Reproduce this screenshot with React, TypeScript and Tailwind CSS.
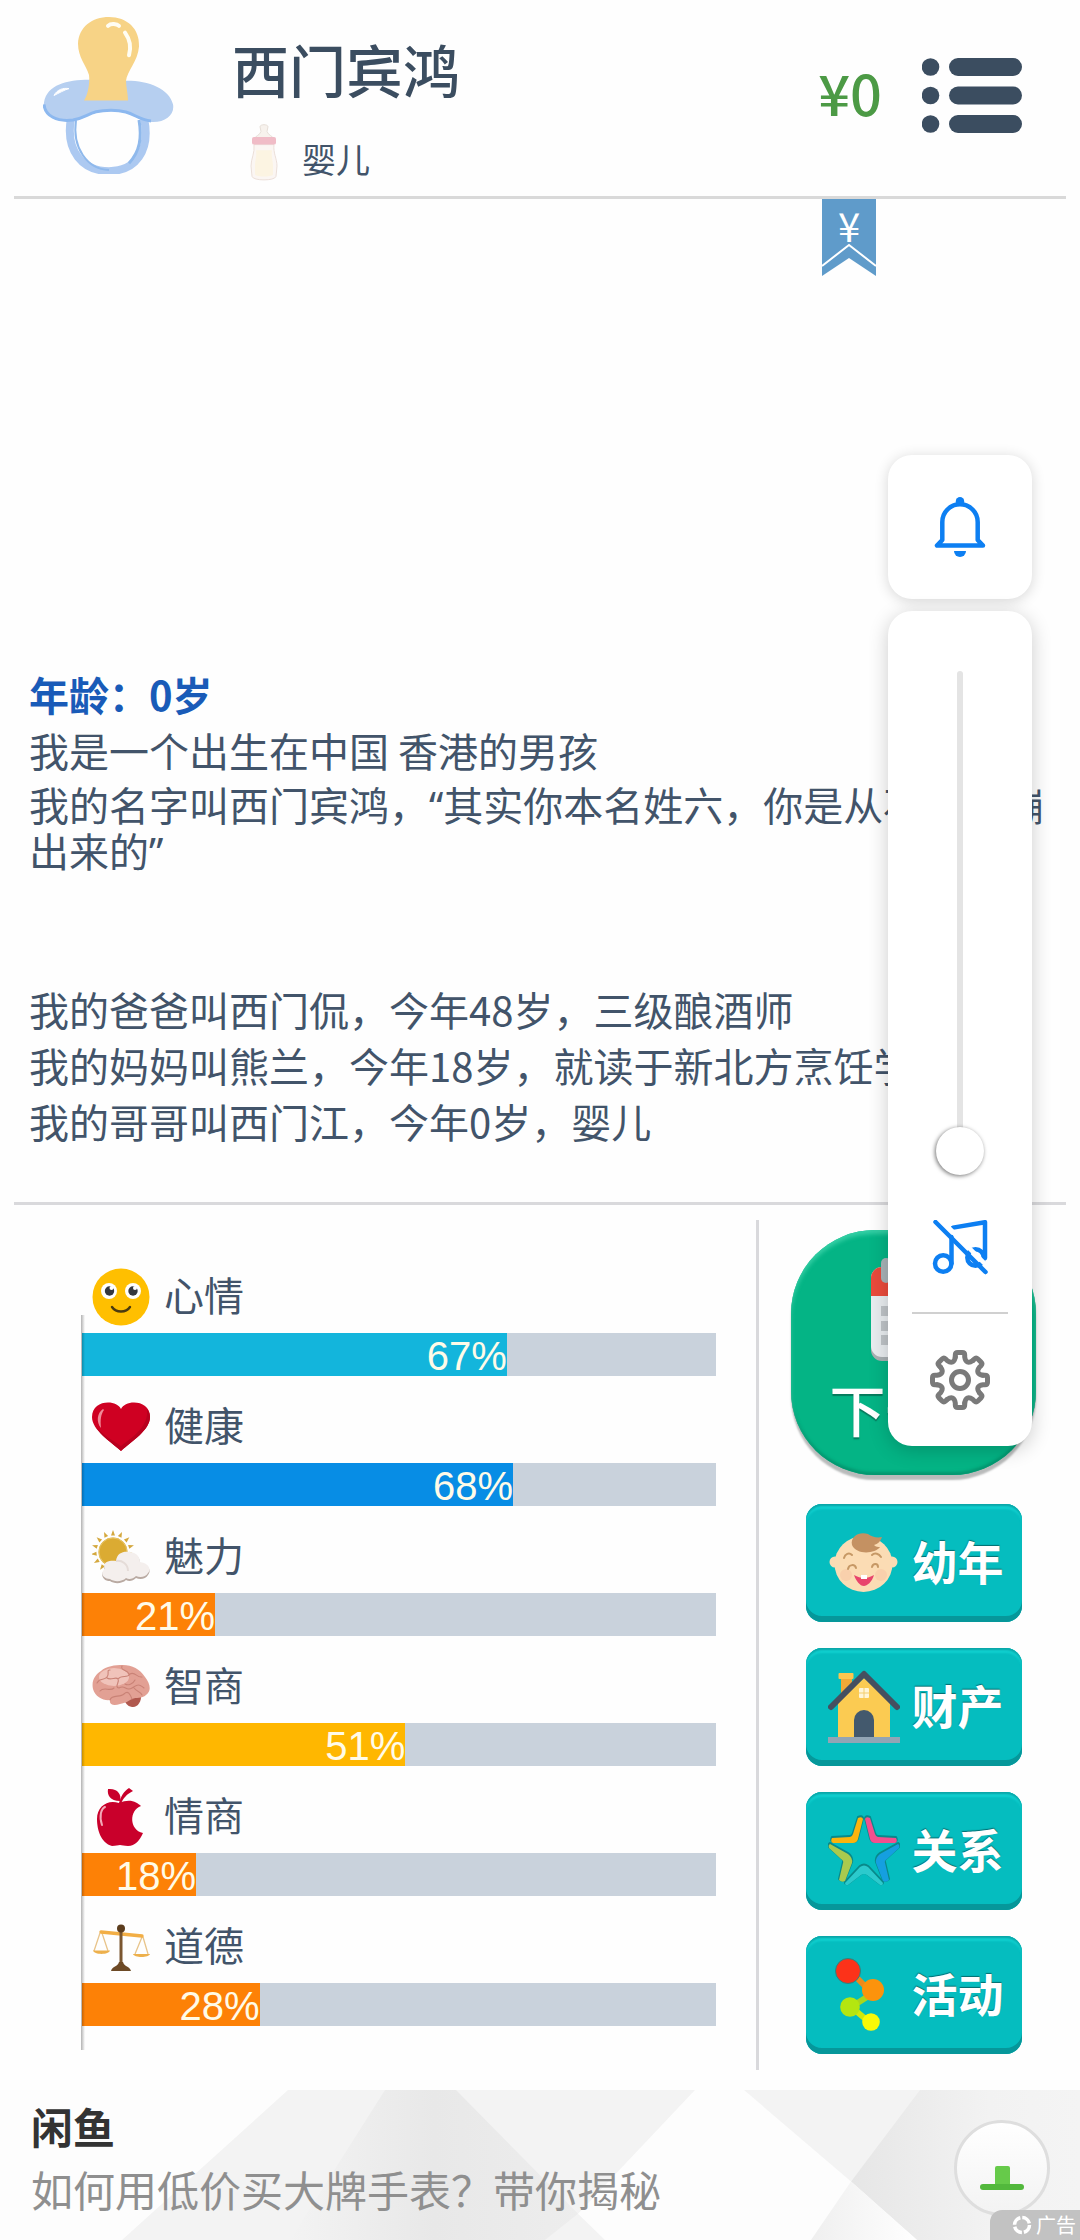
import { useState, ReactNode } from "react";

interface Stat {
  label: string;
  value: number;
  color: string;
  icon: ReactNode;
}

interface MenuItem {
  label: string;
  icon: ReactNode;
}

function PacifierIcon() {
  return (
    <svg viewBox="0 0 131 161" preserveAspectRatio="none" className="h-[158px] w-[131px]" aria-hidden="true">
      <path
        d="M28 104C22 138 40 158 66 158C92 158 108 138 101 104"
        fill="none"
        stroke="#acc9f1"
        strokeWidth="8"
      />
      <path
        d="M33 106C29 134 44 156 66 157"
        fill="none"
        stroke="#8fb9ec"
        strokeWidth="2"
      />
      <path
        d="M96 106C99 124 97 138 86 150"
        fill="none"
        stroke="#8fb9ec"
        strokeWidth="3"
      />
      <path
        d="M46 65C24 65 4 70 1 88C-1 102 14 109 30 107C46 104 46 97 68 97C90 97 92 106 108 108C122 109 132 101 130 90C126 74 106 66 84 66Z"
        fill="#b6cff0"
      />
      <path
        d="M1 90C2 102 14 108 30 106C46 103 46 96 68 96C90 96 92 105 108 107"
        fill="none"
        stroke="#8cb8ef"
        strokeWidth="3"
      />
      <path
        d="M66 1C84 1 97 13 96 31C95 46 84 56 83 66C83 72 85 80 85 86H41C45 80 47 68 46 60C43 50 35 42 35 28C36 11 49 1 66 1Z"
        fill="#f7d386"
      />
      <path
        d="M65 10C68 7 74 8 76 10M82 17C87 24 88 33 86 40"
        fill="none"
        stroke="#fffdf3"
        strokeWidth="4"
        strokeLinecap="round"
      />
      <path d="M11 81C14 75 20 73 26 74C22 75 15 79 11 81Z" fill="#fff" stroke="#fff" />
    </svg>
  );
}

function BottleIcon() {
  return (
    <svg viewBox="0 0 28 62" preserveAspectRatio="none" className="h-[58px] w-7" aria-hidden="true">
      <path
        d="M10 3C10 0 18 0 18 3L17 8C18 12 23 13 24 16H4C5 13 10 12 11 8Z"
        fill="#f7f2ed"
        stroke="#e5ddd6"
      />
      <path
        d="M4 22H24C23 31 27 37 27 45L26 56C25 61 3 61 2 56L1 45C1 37 5 31 4 22Z"
        fill="#fbf6f3"
        stroke="#eaded8"
      />
      <path
        d="M6 28H22C21 34 23 39 23 45V54C21 57 7 57 5 54V45C5 39 7 34 6 28Z"
        fill="#fcf4e2"
      />
      <rect x="2" y="14" width="24" height="8" rx="2" fill="#f0bcc7" />
    </svg>
  );
}

function ListIcon() {
  return (
    <svg viewBox="0 0 100 75" className="h-[75px] w-[100px]" fill="#3b4d60" aria-hidden="true">
      {[0, 28.5, 57].map((y) => (
        <g key={y}>
          <circle cx="8.5" cy={y + 9} r="8.8" />
          <rect x="27" y={y} width="73" height="18" rx="9" />
        </g>
      ))}
    </svg>
  );
}

function BellIcon() {
  return (
    <svg viewBox="0 0 60 60" className="h-[60px] w-[60px]" aria-hidden="true">
      <path
        d="M7 48.6H53L47.7 43V25A17.7 17.7 0 0 0 12.3 25V43Z"
        fill="none"
        stroke="#0d7ff2"
        strokeWidth="4.5"
        strokeLinejoin="round"
      />
      <circle cx="30" cy="4.3" r="4.2" fill="#0d7ff2" />
      <path d="M24 54H36A6 6 0 0 1 24 54Z" fill="#0d7ff2" />
    </svg>
  );
}

function MusicOffIcon() {
  return (
    <svg
      viewBox="0 0 56 56"
      className="h-14 w-14"
      fill="none"
      stroke="#0d7ff2"
      strokeWidth="4.5"
      strokeLinecap="round"
      strokeLinejoin="round"
      aria-hidden="true"
    >
      <circle cx="11.2" cy="43.5" r="8.2" />
      <path d="M19.5 43.5V17" />
      <path d="M21 7.6L53 2.2V38" />
      <circle cx="43.5" cy="37.5" r="8.2" />
      <path d="M7.5 -1.5L57.5 48.5" stroke="#fff" />
      <path d="M3.5 2L53.500 52" />
    </svg>
  );
}

function GearIcon() {
  return (
    <svg
      viewBox="-30 -30 60 60"
      className="h-[60px] w-[60px]"
      fill="none"
      stroke="#7a7a7a"
      strokeWidth="5"
      strokeLinecap="round"
      aria-hidden="true"
    >
      {[0, 45, 90, 135, 180, 225, 270, 315].map((deg) => (
        <path
          key={deg}
          transform={`rotate(${deg})`}
          d="M-4.700 -23V-25Q-4.700 -27.500 -2.200 -27.500H2.200Q4.700 -27.500 4.700 -25V-23C5.500 -17.500 8.500 -16.300 12.900 -19.600"
        />
      ))}
      <circle r="8.500" />
    </svg>
  );
}

function SmileIcon() {
  return (
    <svg viewBox="0 0 58 58" className="h-[58px] w-[58px]" aria-hidden="true">
      <circle cx="29" cy="29" r="28.500" fill="#ffbf00" />
      <circle cx="17" cy="23" r="8" fill="#fff" />
      <circle cx="41" cy="23" r="8" fill="#fff" />
      <circle cx="17.500" cy="23" r="4.700" fill="#35383f" />
      <circle cx="41" cy="23" r="4.700" fill="#35383f" />
      <circle cx="19.500" cy="20" r="2" fill="#fff" />
      <circle cx="43" cy="20" r="2" fill="#fff" />
      <path
        d="M20 39C24 45 34 45 38 39"
        fill="none"
        stroke="#4a3a10"
        strokeWidth="2.400"
        strokeLinecap="round"
      />
    </svg>
  );
}

function HeartIcon() {
  return (
    <svg viewBox="0 0 58 58" className="h-[58px] w-[58px]" aria-hidden="true">
      <path
        d="M29 53C18 43 0 32 0 19C0 9 8 4.500 16 4.500C22 4.500 27 7 29 11C31 7 36 4.500 42 4.500C50 4.500 58 9 58 19C58 32 40 43 29 53Z"
        fill="#cf0022"
      />
      <path d="M29 53C40 43 58 32 58 19C58 16 57 13 55 11C57 28 42 38 29 48C20 42 10 36 4 29C9 38 20 45 29 53Z" fill="#b8001e" />
      <path d="M11 11C5 15 4 24 9 30C8 22 9 16 12 12Z" fill="#f08a98" />
    </svg>
  );
}

function WeatherIcon() {
  return (
    <svg viewBox="0 0 58 58" className="h-[58px] w-[58px]" aria-hidden="true">
      {[0, 24, 48, 72, 96, 120, 144, 168, 192, 216, 240, 264, 288, 312, 336].map((deg) => (
        <path
          key={deg}
          transform={`rotate(${deg} 21 24)`}
          d="M19 7.500L21 2L23 7.500Z"
          fill="#d4a83e"
        />
      ))}
      <circle cx="21" cy="24" r="14.500" fill="#dbab32" />
      <circle cx="21" cy="24" r="14" fill="none" stroke="#e8c567" />
      <path
        d="M18 53C10 53 8 45 13 42C10 36 16 33 24 34C25 26 31 24 38 25C45 26 48 30 48 35C56 36 60 42 56 47C54 51 48 52 44 50C41 53 37 54 34 52C30 56 22 56 18 53Z"
        fill="#b9aaa2"
      />
      <path
        d="M18 51C10 51 8 44 13 41C10 35 16 32 24 33C25 25 31 23 38 24C45 25 48 29 48 34C56 35 60 41 56 45C54 49 48 50 44 48C41 51 37 52 34 50C30 54 22 54 18 51Z"
        fill="#f4efed"
      />
      <path d="M24 33C30 32 36 36 36 43" fill="none" stroke="#e5dcd8" strokeWidth="2" />
    </svg>
  );
}

function BrainIcon() {
  return (
    <svg viewBox="0 0 58 58" className="h-[58px] w-[58px]" aria-hidden="true">
      <path d="M32 40L49 36C50 44 45 50 40 49C35 48 33 45 32 40Z" fill="#b0584e" />
      <path
        d="M1 31C-1 22 4 16 9 13C14 8 23 7 31 7C40 7 48 11 53 19C58 25 60 33 54 37C50 41 44 39 40 41C36 43 34 45 28 46C22 48 17 47 18 42C12 43 3 39 1 31Z"
        fill="#e2a094"
      />
      <ellipse cx="22" cy="19" rx="15" ry="9" fill="#f0c3ba" />
      <path
        d="M5 25C8 19 12 23 15 19S14 12 18 12M15 20C19 23 24 18 26 21S22 29 27 30M8 33C12 28 18 34 22 30M26 21C30 16 35 21 38 16M30 8C28 13 35 11 37 16M38 16C43 13 45 20 50 19M27 30C33 26 34 34 40 30S47 26 52 30M18 42C20 36 28 40 32 36S38 36 40 41M42 30C45 34 49 34 50 37M33 26C36 28 41 26 43 22"
        fill="none"
        stroke="#c98276"
        strokeWidth="1.100"
        strokeLinecap="round"
      />
    </svg>
  );
}

function AppleIcon() {
  return (
    <svg viewBox="0 0 58 58" className="h-[58px] w-[58px]" aria-hidden="true">
      <g fill="#c9002b">
        <path d="M27 15C38 10 45 14 49 18C37 22 37 42 51 45C48 52 43 58 36 58C32 58 30 57 28 57C26 57 24 58 20 58C9 55 5 42 5 31C5 18 16 11 27 15Z" />
        <path d="M28 13C18 13 15 7 16 1C25 0 30 6 28 13Z" />
        <path d="M27 15C29 8 32 3 37 0L41 3C35 6 31 10 29 16Z" />
      </g>
      <path
        d="M10 37C7 28 9 21 13 19"
        fill="none"
        stroke="#f3a9b8"
        strokeWidth="2"
        strokeLinecap="round"
      />
    </svg>
  );
}

function ScalesIcon() {
  return (
    <svg viewBox="0 0 58 58" className="h-[58px] w-[58px]" aria-hidden="true">
      <path
        d="M8 15L2 33M10 15L16 33M50 19L43 36M51 19L56 36"
        fill="none"
        stroke="#e8c48a"
        strokeWidth="1.300"
      />
      <path d="M9 14L50 18" stroke="#f2ae45" strokeWidth="3.400" strokeLinecap="round" />
      <rect x="27.500" y="11" width="3" height="34" fill="#7a5630" />
      <circle cx="29" cy="10.500" r="4" fill="#5c3d1e" />
      <path d="M19 53C20 48 26 49 27 44H31C32 49 38 48 39 53Z" fill="#6d4a26" />
      <path d="M1 32.500H18C17 37 2 37 1 32.500Z" fill="#edb04c" />
      <path d="M41 36H58C57 40 42 40 41 36Z" fill="#edb04c" />
    </svg>
  );
}

function CalendarIcon() {
  return (
    <svg viewBox="0 0 86 104" className="h-[104px] w-[86px]" aria-hidden="true">
      <rect y="12" width="86" height="91" rx="11" fill="#a9b0b3" />
      <rect y="9" width="86" height="90" rx="11" fill="#e9edf0" />
      <path d="M0 38V20A11 11 0 0 1 11 9H75A11 11 0 0 1 86 20V38Z" fill="#ea4b3c" />
      <rect x="10" y="0" width="10" height="25" rx="5" fill="#a9b4b8" />
      <rect x="66" y="0" width="10" height="25" rx="5" fill="#a9b4b8" />
      {[48, 63, 77].map((y) => (
        <path key={y} d={`M10 ${y}h12v10h-12zM28 ${y}h12v10h-12zM46 ${y}h12v10h-12zM64 ${y}h12v10h-12z`} fill="#bfc4c8" />
      ))}
    </svg>
  );
}

function BabyIcon() {
  return (
    <svg viewBox="0 0 72 72" className="h-[72px] w-[72px]" aria-hidden="true">
      <circle cx="7" cy="35" r="5.500" fill="#fbdcb4" />
      <circle cx="64" cy="35" r="5.500" fill="#fbdcb4" />
      <ellipse cx="35.500" cy="37" rx="29" ry="28" fill="#fbdcb4" />
      <circle cx="18" cy="48" r="6" fill="#f9d0ac" />
      <circle cx="53" cy="48" r="6" fill="#f9d0ac" />
      <path d="M24 18C22 9 32 4 40 7C44 10 49 11 54 10C52 15 50 17 46 18C48 20 50 20 52 20C47 27 28 28 24 18Z" fill="#c49162" />
      <g fill="none" stroke="#c69865" strokeWidth="2" strokeLinecap="round">
        <path d="M16 31C17 27 21 25 24 28" />
        <path d="M44 28C47 25 51 27 53 30" />
        <path d="M20 42C21 37 27 37 28 41" />
        <path d="M44 40C45 36 50 36 50 40" />
      </g>
      <path d="M26 48C33 52 39 52 46 48C44 55 39 59 36 59C32 59 28 54 26 48Z" fill="#e8446c" />
      <path d="M33 48H39V52H33Z" fill="#fff" />
    </svg>
  );
}

function HouseIcon() {
  return (
    <svg viewBox="0 0 72 74" className="h-[74px] w-[72px]" aria-hidden="true">
      <path d="M13 6H24V24L13 30Z" fill="#f0a937" />
      <rect x="10.500" y="3" width="15" height="6" rx="1" fill="#fbc64f" />
      <path d="M10 67V32L36 8L62 32V67Z" fill="#fbcb52" />
      <path d="M3 37L36 4L69 37" fill="none" stroke="#454f60" strokeWidth="6" strokeLinecap="round" strokeLinejoin="round" />
      <rect x="31" y="18" width="10" height="10" rx="1" fill="#fff5d6" />
      <path d="M36 18V28M31 23H41" stroke="#f3cd6d" />
      <path d="M26 68V50A10 10 0 0 1 46 50V68Z" fill="#43596d" />
      <rect y="67" width="72" height="6" fill="#92a5b5" />
    </svg>
  );
}

function StarIcon() {
  return (
    <svg viewBox="0 0 72 72" className="h-[72px] w-[72px]" strokeLinejoin="round" strokeWidth="2" aria-hidden="true">
      <g transform="translate(0 -1)" fill="#08898a" stroke="#08898a">
        <path d="M30 3Q34 1 35 4L30 24Q29 28 25 28H5Q2 27 4 23L22 22Q24 22 25 19Z" />
        <path d="M42 3Q38 1 37 4L42 24Q43 28 47 28H67Q70 27 68 23L50 22Q48 22 47 19Z" />
        <path d="M2 29L20 39Q25 43 24 48L17 66Q14 68 11 65L15 48Q16 46 13 44L1 33Q0 30 2 29Z" />
        <path d="M70 29L52 39Q47 43 48 48L55 66Q58 68 61 65L57 48Q56 46 59 44L71 33Q72 30 70 29Z" />
        <path d="M17 68L32 52Q36 49 40 52L55 68Q55 71 52 70L39 60Q36 58 33 60L20 70Q17 71 17 68Z" />
      </g>
      <path d="M30 3Q34 1 35 4L30 24Q29 28 25 28H5Q2 27 4 23L22 22Q24 22 25 19Z" fill="#fbb40d" />
      <path d="M42 3Q38 1 37 4L42 24Q43 28 47 28H67Q70 27 68 23L50 22Q48 22 47 19Z" fill="#f2508e" />
      <path d="M2 29L20 39Q25 43 24 48L17 66Q14 68 11 65L15 48Q16 46 13 44L1 33Q0 30 2 29Z" fill="#a9ca4e" />
      <path d="M70 29L52 39Q47 43 48 48L55 66Q58 68 61 65L57 48Q56 46 59 44L71 33Q72 30 70 29Z" fill="#159fe0" />
      <path d="M17 68L32 52Q36 49 40 52L55 68Q55 71 52 70L39 60Q36 58 33 60L20 70Q17 71 17 68Z" fill="#2bcacd" />
    </svg>
  );
}

function NodesIcon() {
  return (
    <svg viewBox="0 0 72 76" className="h-[76px] w-[72px]" aria-hidden="true">
      <path d="M26 18L40 32" stroke="#ef8a1a" strokeWidth="6" />
      <path d="M42 38L28 47" stroke="#a9d51d" strokeWidth="6" />
      <path d="M28 54L40 64" stroke="#cfe80c" strokeWidth="6" />
      <circle cx="20" cy="14" r="12.500" fill="#fc3219" stroke="#268784" />
      <circle cx="45" cy="33" r="11" fill="#fc930c" />
      <circle cx="22" cy="50" r="9.800" fill="#b4e610" />
      <circle cx="43" cy="65" r="8.800" fill="#f9f908" />
    </svg>
  );
}

const stats: Stat[] = [
  { label: "心情", value: 67, color: "bg-[#13b5dc]", icon: <SmileIcon /> },
  { label: "健康", value: 68, color: "bg-[#078de5]", icon: <HeartIcon /> },
  { label: "魅力", value: 21, color: "bg-[#fd8106]", icon: <WeatherIcon /> },
  { label: "智商", value: 51, color: "bg-[#ffb700]", icon: <BrainIcon /> },
  { label: "情商", value: 18, color: "bg-[#fd8106]", icon: <AppleIcon /> },
  { label: "道德", value: 28, color: "bg-[#fd8106]", icon: <ScalesIcon /> },
];

const menu: MenuItem[] = [
  { label: "幼年", icon: <BabyIcon /> },
  { label: "财产", icon: <HouseIcon /> },
  { label: "关系", icon: <StarIcon /> },
  { label: "活动", icon: <NodesIcon /> },
];

function Header() {
  return (
    <header className="mx-3.5 flex h-[199px] items-start border-b-[3px] border-[#d9d9d9] pr-11 pl-[29px]">
      <div className="pt-4">
        <PacifierIcon />
      </div>
      <div className="flex-1 pt-9 pl-[58px]">
        <h1 className="text-[57px] leading-[64px] font-medium text-[#3b4d60]">西门宾鸿</h1>
        <div className="mt-6 flex items-center gap-6 pl-[18px]">
          <BottleIcon />
          <span className="pt-3 text-[34px] leading-10">婴儿</span>
        </div>
      </div>
      <div className="flex items-start gap-10 pt-[58px]">
        <span className="text-[56px] leading-[68px] font-medium text-[#4c9a45]">¥0</span>
        <button type="button" aria-label="菜单">
          <ListIcon />
        </button>
      </div>
    </header>
  );
}

function LifeLog() {
  return (
    <section className="relative mx-3.5 flex flex-1 flex-col justify-end gap-2.5 border-b-[3px] border-[#d9d9dc] px-[15px] pt-24 pb-[58px] text-[40px] leading-[46px]">
      <button
        type="button"
        aria-label="财务"
        className="absolute top-0 right-[190px] flex h-[77px] w-[54px] justify-center text-[40px] leading-[52px] text-white"
      >
        <svg viewBox="0 0 54 77" className="absolute inset-0 h-[77px] w-[54px]" aria-hidden="true">
          <path d="M0 0H54V77L27 59L0 77Z" fill="#5f9bca" />
          <path d="M0 67L27 46L54 67" fill="none" stroke="#fff" strokeWidth="2" />
        </svg>
        <span className="relative">¥</span>
      </button>
      <p className="font-bold text-[#195bb8]">年龄：0岁</p>
      <p>我是一个出生在中国 香港的男孩</p>
      <p className="font-['Noto_Sans','Noto_Sans_CJK_SC',sans-serif]">
        我的名字叫西门宾鸿，“其实你本名姓六，你是从石头里蹦出来的”
      </p>
      <p className="mt-[101px]">我的爸爸叫西门侃，今年48岁，三级酿酒师</p>
      <p>我的妈妈叫熊兰，今年18岁，就读于新北方烹饪学校</p>
      <p>我的哥哥叫西门江，今年0岁，婴儿</p>
    </section>
  );
}

function StatRow({ stat }: { stat: Stat }) {
  return (
    <div>
      <div className="flex h-[87px] items-center gap-3.5 pt-3.5 pl-2.5">
        {stat.icon}
        <span className="pb-1.5 text-[40px] leading-[52px]">{stat.label}</span>
      </div>
      <div className="h-[43px] bg-[#c9d2dc]">
        <div
          className={`${stat.color} h-full text-right font-['Liberation_Sans',sans-serif] text-[40px] leading-[46px] text-[#fffbe8]`}
          style={{ width: `${stat.value}%` }}
        >
          {stat.value}%
        </div>
      </div>
    </div>
  );
}

function AudioPanel() {
  const [volume, setVolume] = useState(0);

  return (
    <aside className="absolute top-[455px] right-12 flex w-36 flex-col gap-3">
      <button
        type="button"
        aria-label="通知"
        className="flex h-36 items-center justify-center rounded-3xl bg-white shadow-[0_2px_14px_rgba(0,0,0,0.16)]"
      >
        <BellIcon />
      </button>
      <div className="flex flex-col items-center rounded-3xl bg-white pt-[60px] pb-9 shadow-[0_4px_20px_rgba(0,0,0,0.2)]">
        <input
          type="range"
          aria-label="音量"
          value={volume}
          onChange={(e) => setVolume(Number(e.target.value))}
          className="h-[504px] w-[50px] appearance-none bg-transparent [direction:rtl] [writing-mode:vertical-lr] [&::-webkit-slider-runnable-track]:w-1.5 [&::-webkit-slider-runnable-track]:rounded-full [&::-webkit-slider-runnable-track]:bg-[#e4e4e4] [&::-webkit-slider-thumb]:ml-[-21px] [&::-webkit-slider-thumb]:h-12 [&::-webkit-slider-thumb]:w-12 [&::-webkit-slider-thumb]:appearance-none [&::-webkit-slider-thumb]:rounded-full [&::-webkit-slider-thumb]:bg-white [&::-webkit-slider-thumb]:shadow-[-1px_1px_4px_rgba(0,0,0,0.55)]"
        />
        <button type="button" aria-label="静音" className="mt-[45px]">
          <MusicOffIcon />
        </button>
        <hr className="my-9 w-24 border-t-2 border-[#d0d0d0]" />
        <button type="button" aria-label="设置">
          <GearIcon />
        </button>
      </div>
    </aside>
  );
}

function AdBanner() {
  return (
    <footer className="relative flex h-[150px] items-start justify-between overflow-hidden bg-[#fdfdfd] pr-[30px] pl-[31px]">
      <svg
        viewBox="0 0 1080 149"
        preserveAspectRatio="none"
        className="absolute inset-0 h-full w-full"
        aria-hidden="true"
      >
        <defs>
          <linearGradient id="peak" x1="0" x2="1">
            <stop offset="0" stopColor="#f3f3f3" />
            <stop offset="0.5" stopColor="#e8e8e8" />
            <stop offset="1" stopColor="#ededed" />
          </linearGradient>
          <linearGradient id="slope" x1="0" x2="1">
            <stop offset="0" stopColor="#e6e6e6" />
            <stop offset="0.6" stopColor="#f2f2f2" />
            <stop offset="1" stopColor="#f4f4f4" />
          </linearGradient>
          <linearGradient id="foot" x1="0" x2="1">
            <stop offset="0" stopColor="#efefef" />
            <stop offset="1" stopColor="#ffffff" />
          </linearGradient>
        </defs>
        <path d="M288 0H695L578 123L605 149H122Z" fill="#f3f3f3" />
        <path d="M385 0H456L578 123L545 149H290Z" fill="url(#peak)" />
        <path d="M744 0H922L851 91Z" fill="#f3f3f3" />
        <path d="M920 0H1080V149H917L851 91Z" fill="url(#slope)" />
        <path d="M851 91L917 149H811Z" fill="url(#foot)" />
      </svg>
      <a href="#ad" className="relative pt-1.5 text-[42px]">
        <strong className="block leading-[60px] font-bold text-[#333]">闲鱼</strong>
        <span className="block leading-[66px] text-[#8f8f8f]">如何用低价买大牌手表？带你揭秘</span>
      </a>
      <button
        type="button"
        aria-label="下载"
        className="relative mt-[30px] h-24 w-24 rounded-full border-[3px] border-[#dedede] bg-linear-to-b from-white to-[#f3f3f3]"
      >
        <svg viewBox="0 0 90 90" className="h-full w-full" aria-hidden="true">
          <rect x="38" y="43" width="15" height="20" rx="2" fill="#66ca4a" />
          <rect x="23" y="61" width="44" height="6" rx="3" fill="#52b83c" />
        </svg>
      </button>
      <span className="absolute right-0 bottom-0 flex h-[30px] w-[90px] items-center justify-end gap-1 rounded-tl-xl bg-[#c2c2c2] pr-1 text-[20px] leading-[30px] text-white">
        <svg viewBox="0 0 20 20" className="h-5 w-5" aria-hidden="true">
          <circle cx="10" cy="10" r="7.500" fill="none" stroke="#fff" strokeWidth="3.500" strokeDasharray="9.800 2" />
        </svg>
        广告
      </span>
    </footer>
  );
}

export default function App() {
  return (
    <main
      lang="zh-CN"
      className="relative flex min-h-screen flex-col bg-[#fefefe] font-['Noto_Sans_CJK_SC',sans-serif] text-[#42546a]"
    >
      <Header />
      <LifeLog />
      <section className="flex pt-[15px] pb-5">
        <div className="relative flex-1 pt-[26px] pr-10 pl-[82px]">
          {stats.map((stat) => (
            <StatRow key={stat.label} stat={stat} />
          ))}
          <div className="absolute top-[95px] bottom-5 left-[81px] w-1 bg-linear-to-r from-black/30 to-transparent" />
        </div>
        <div className="flex w-[324px] flex-col items-center border-l-[3px] border-[#d9d9dc] pt-2.5 pr-3 pb-4">
          <button
            type="button"
            className="mb-[29px] flex h-[245px] w-[245px] flex-col items-center rounded-[84px] bg-[#04b485] pt-7 text-[56px] leading-[92px] font-medium text-white shadow-[0_5px_2px_#b9bbbb,inset_0_4px_4px_#35cfa5,inset_0_-3px_3px_#04966f] [text-shadow:0_2px_1px_#067a5c]"
          >
            <CalendarIcon />
            下一年
          </button>
          <div className="flex flex-col gap-[26px]">
            {menu.map((item) => (
              <button
                key={item.label}
                type="button"
                className="flex h-[118px] w-[216px] items-center gap-3 rounded-2xl bg-[#05bdbf] pl-[22px] text-[46px] font-bold text-white shadow-[inset_0_-6px_0_#06979a,inset_0_2px_2px_#0aa5a7,inset_0_5px_2px_#10d0d0] [text-shadow:0_-1px_1px_#056b6d]"
              >
                {item.icon}
                <span className="pb-1.5 leading-[60px]">{item.label}</span>
              </button>
            ))}
          </div>
        </div>
      </section>
      <AdBanner />
      <AudioPanel />
    </main>
  );
}
